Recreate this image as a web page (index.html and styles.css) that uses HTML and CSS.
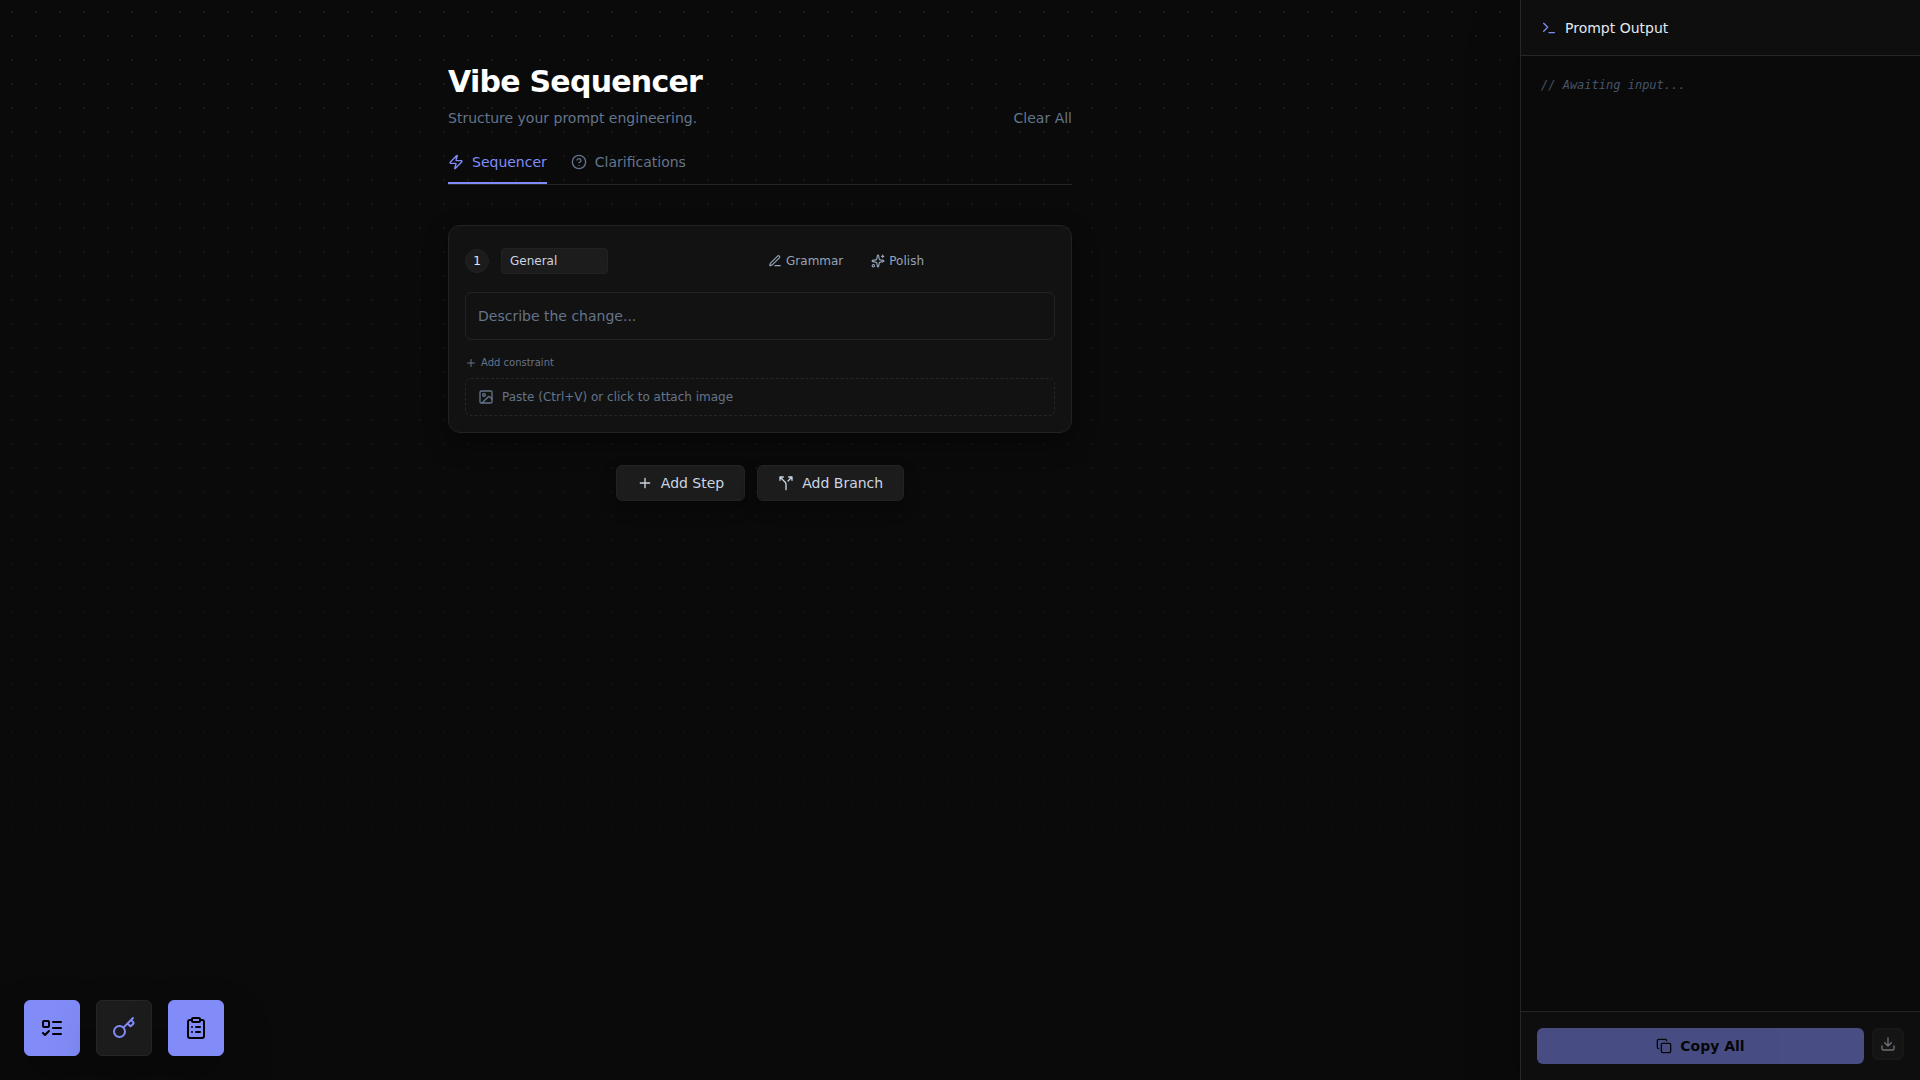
FILE: index.html
```html
<!DOCTYPE html>
<html lang="en">
<head>
  <meta charset="UTF-8">
  <meta name="viewport" content="width=device-width, initial-scale=1.0">
  <title>Vibe Sequencer</title>
  <link rel="stylesheet" href="styles.css">
</head>
<body>
  <div class="app">
    <main class="workspace">
      <div class="content">
        <header class="page-header">
          <div>
            <h1>Vibe Sequencer</h1>
            <p>Structure your prompt engineering.</p>
          </div>
          <button type="button" class="clear">Clear All</button>
        </header>

        <nav class="tabs">
          <button type="button" class="tab active">
            <svg class="icon" viewBox="0 0 24 24"><path d="M4 14a1 1 0 0 1-.78-1.63l9.9-10.2a.5.5 0 0 1 .86.46l-1.92 6.02A1 1 0 0 0 13 10h7a1 1 0 0 1 .78 1.63l-9.9 10.2a.5.5 0 0 1-.86-.46l1.92-6.02A1 1 0 0 0 11 14z"/></svg>
            Sequencer
          </button>
          <button type="button" class="tab">
            <svg class="icon" viewBox="0 0 24 24"><circle cx="12" cy="12" r="10"/><path d="M9.09 9a3 3 0 0 1 5.83 1c0 2-3 3-3 3M12 17h.01"/></svg>
            Clarifications
          </button>
        </nav>

        <section class="card">
          <div class="card-head">
            <span class="step">1</span>
            <input type="text" class="category" value="General" aria-label="Category">
            <div class="tools">
              <button type="button" class="tool">
                <svg class="icon small" viewBox="0 0 24 24"><path d="M12 20h9M16.376 3.622a1 1 0 0 1 3.002 3.002L7.368 18.635a2 2 0 0 1-.855.506l-2.872.838a.5.5 0 0 1-.62-.62l.838-2.872a2 2 0 0 1 .506-.854z"/></svg>
                Grammar
              </button>
              <button type="button" class="tool">
                <svg class="icon small" viewBox="0 0 24 24"><path d="M11.017 2.814a1 1 0 0 1 1.966 0l1.051 5.558a2 2 0 0 0 1.594 1.594l5.558 1.051a1 1 0 0 1 0 1.966l-5.558 1.051a2 2 0 0 0-1.594 1.594l-1.051 5.558a1 1 0 0 1-1.966 0l-1.051-5.558a2 2 0 0 0-1.594-1.594l-5.558-1.051a1 1 0 0 1 0-1.966l5.558-1.051a2 2 0 0 0 1.594-1.594zM20 2v4M22 4h-4"/><circle cx="4" cy="20" r="2"/></svg>
                Polish
              </button>
            </div>
          </div>
          <textarea class="prompt" rows="1" placeholder="Describe the change..." aria-label="Step description"></textarea>
          <button type="button" class="constraint">
            <svg class="icon tiny" viewBox="0 0 24 24"><path d="M5 12h14M12 5v14"/></svg>
            Add constraint
          </button>
          <button type="button" class="attach">
            <svg class="icon" viewBox="0 0 24 24"><rect x="3" y="3" width="18" height="18" rx="2"/><circle cx="9" cy="9" r="2"/><path d="m21 15-3.086-3.086a2 2 0 0 0-2.828 0L6 21"/></svg>
            Paste (Ctrl+V) or click to attach image
          </button>
        </section>

        <div class="actions">
          <button type="button" class="add">
            <svg class="icon" viewBox="0 0 24 24"><path d="M5 12h14M12 5v14"/></svg>
            Add Step
          </button>
          <button type="button" class="add">
            <svg class="icon" viewBox="0 0 24 24"><path d="M16 3h5v5M8 3H3v5M12 22v-8.3a4 4 0 0 0-1.172-2.872L3 3M15 9l6-6"/></svg>
            Add Branch
          </button>
        </div>
      </div>
    </main>

    <aside class="output">
      <h2 class="output-head">
        <svg class="icon" viewBox="0 0 24 24"><path d="m4 17 6-6-6-6M12 19h8"/></svg>
        Prompt Output
      </h2>
      <div class="output-body">// Awaiting input...</div>
      <div class="output-foot">
        <button type="button" class="copy" disabled>
          <svg class="icon" viewBox="0 0 24 24"><rect x="8" y="8" width="14" height="14" rx="2"/><path d="M4 16c-1.1 0-2-.9-2-2V4c0-1.1.9-2 2-2h10c1.1 0 2 .9 2 2"/></svg>
          Copy All
        </button>
        <button type="button" class="download" aria-label="Download" disabled>
          <svg class="icon" viewBox="0 0 24 24"><path d="M12 15V3M21 15v4a2 2 0 0 1-2 2H5a2 2 0 0 1-2-2v-4M7 10l5 5 5-5"/></svg>
        </button>
      </div>
    </aside>
  </div>

  <!-- floating buttons, bottom left -->
  <div class="dock">
    <button type="button" class="dock-btn on" aria-label="Tasks">
      <svg class="icon large" viewBox="0 0 24 24"><rect x="3" y="5" width="6" height="6" rx="1"/><path d="m3 17 2 2 4-4M13 6h8M13 12h8M13 18h8"/></svg>
    </button>
    <button type="button" class="dock-btn" aria-label="API key">
      <svg class="icon large" viewBox="0 0 24 24"><path d="m15.5 7.500 2.300 2.300a1 1 0 0 0 1.400 0l2.100-2.100a1 1 0 0 0 0-1.400L19 4M21 2l-9.600 9.600"/><circle cx="7.500" cy="15.500" r="5.500"/></svg>
    </button>
    <button type="button" class="dock-btn on" aria-label="Clipboard">
      <svg class="icon large" viewBox="0 0 24 24"><rect x="8" y="2" width="8" height="4" rx="1"/><path d="M16 4h2a2 2 0 0 1 2 2v14a2 2 0 0 1-2 2H6a2 2 0 0 1-2-2V6a2 2 0 0 1 2-2h2M12 11h4M12 16h4M8 11h.01M8 16h.01"/></svg>
    </button>
  </div>
</body>
</html>
```

FILE: styles.css
```css
* {
  box-sizing: border-box;
}
body {
  margin: 0;
  background: #0a0a0a;
  color: #e2e8f0;
  font-family: 'DejaVu Sans', sans-serif;
  font-size: 14px;
  line-height: 20px;
}
h1, h2, p {
  margin: 0;
}
button, input, textarea {
  font: inherit;
  color: inherit;
}
button {
  display: flex;
  align-items: center;
  padding: 0;
  border: none;
  background: none;
  cursor: pointer;
}
.icon {
  width: 16px;
  height: 16px;
  flex-shrink: 0;
  fill: none;
  stroke: currentColor;
  stroke-width: 2;
  stroke-linecap: round;
  stroke-linejoin: round;
}
.icon.tiny {
  width: 12px;
  height: 12px;
}
.icon.small {
  width: 14px;
  height: 14px;
}
.icon.large {
  width: 24px;
  height: 24px;
}

.app {
  display: flex;
  min-height: 100vh;
}
.workspace {
  flex: 1;
  padding: 64px 48px;
  background:
    linear-gradient(to bottom, transparent, #0a0a0a),
    radial-gradient(circle, #1a1a1a 1px, transparent 1px) 0 0 / 24px 24px;
}
.content {
  max-width: 624px;
  margin: 0 auto;
}

.page-header {
  display: flex;
  justify-content: space-between;
  align-items: flex-end;
  margin-bottom: 24px;
}
h1 {
  font-size: 30px;
  line-height: 36px;
  font-weight: bold;
  letter-spacing: -0.025em;
  color: #fff;
  margin-bottom: 8px;
}
.page-header p, .clear {
  color: #64748b;
}
.tabs {
  display: flex;
  gap: 24px;
  border-bottom: 1px solid #262626;
  margin-bottom: 40px;
}
.tab {
  gap: 8px;
  height: 32px;
  padding-bottom: 10px;
  border-bottom: 2px solid transparent;
  color: #64748b;
}
.tab.active {
  color: #818cf8;
  border-color: #818cf8;
}

.card {
  padding: 16px;
  background: #121212;
  border: 1px solid #222;
  border-radius: 12px;
  box-shadow: 0 10px 24px rgba(0, 0, 0, 0.4);
}
.card-head {
  display: flex;
  align-items: center;
  gap: 12px;
  margin: 6px 0 18px;
  font-size: 12px;
  line-height: 16px;
}
.step {
  width: 24px;
  height: 24px;
  border: 1px solid #222;
  border-radius: 50%;
  background: #1c1c1c;
  line-height: 22px;
  text-align: center;
}
.category {
  width: 107px;
  height: 26px;
  padding: 0 8px;
  background: #1c1c1c;
  border: 1px solid #222;
  border-radius: 4px;
  color: #cbd5e1;
}
.tools {
  display: flex;
  gap: 28px;
  margin-left: auto;
  margin-right: 131px;
  color: #94a3b8;
}
.tool {
  gap: 4px;
}
.prompt {
  display: block;
  width: 100%;
  height: 48px;
  padding: 12px;
  background: transparent;
  border: 1px solid #222;
  border-radius: 6px;
  line-height: 22px;
  resize: none;
}
.prompt::placeholder {
  color: #64748b;
}
.constraint {
  gap: 4px;
  margin: 16px 0 8px;
  font-size: 10px;
  line-height: 14px;
  color: #64748b;
}
.attach {
  gap: 8px;
  width: 100%;
  height: 38px;
  padding: 0 12px;
  border: 1px dashed #262626;
  border-radius: 6px;
  font-size: 12px;
  color: #64748b;
}

.actions {
  display: flex;
  justify-content: center;
  gap: 12px;
  margin-top: 32px;
}
.add {
  gap: 8px;
  height: 36px;
  padding: 0 20px;
  background: #1c1c1c;
  border: 1px solid #222;
  border-radius: 6px;
  box-shadow: 0 8px 16px rgba(0, 0, 0, 0.3);
  color: #cbd5e1;
}

.output {
  display: flex;
  flex-direction: column;
  width: 400px;
  border-left: 1px solid #262626;
  background: #0a0a0a;
  box-shadow: 0 24px 48px rgba(0, 0, 0, 0.25);
}
.output-head {
  display: flex;
  align-items: center;
  gap: 8px;
  height: 56px;
  padding: 0 20px;
  background: #0e0e0e;
  border-bottom: 1px solid #262626;
  font-size: 14px;
  font-weight: normal;
}
.output-head .icon {
  color: #818cf8;
}
.output-body {
  flex: 1;
  padding: 19px 20px;
  font-family: 'DejaVu Sans Mono', monospace;
  font-size: 12px;
  font-style: italic;
  color: #475569;
}
.output-foot {
  display: flex;
  align-items: flex-start;
  gap: 8px;
  padding: 16px;
  background: #0e0e0e;
  border-top: 1px solid #262626;
}
.copy {
  flex: 1;
  justify-content: center;
  gap: 8px;
  height: 36px;
  background: #818cf8;
  border-radius: 6px;
  font-weight: bold;
  color: #000;
  opacity: 0.5;
}
.download {
  justify-content: center;
  width: 32px;
  height: 32px;
  background: #1c1c1c;
  border: 1px solid #222;
  border-radius: 6px;
  color: #cbd5e1;
  opacity: 0.5;
}

.dock {
  position: fixed;
  left: 24px;
  bottom: 24px;
  display: flex;
  gap: 16px;
}
.dock-btn {
  justify-content: center;
  width: 56px;
  height: 56px;
  background: #1c1c1c;
  border: 1px solid #262626;
  border-radius: 6px;
  box-shadow: 0 24px 48px rgba(0, 0, 0, 0.25);
  color: #818cf8;
}
.dock-btn.on {
  background: #818cf8;
  border-color: #818cf8;
  color: #000;
}
```
